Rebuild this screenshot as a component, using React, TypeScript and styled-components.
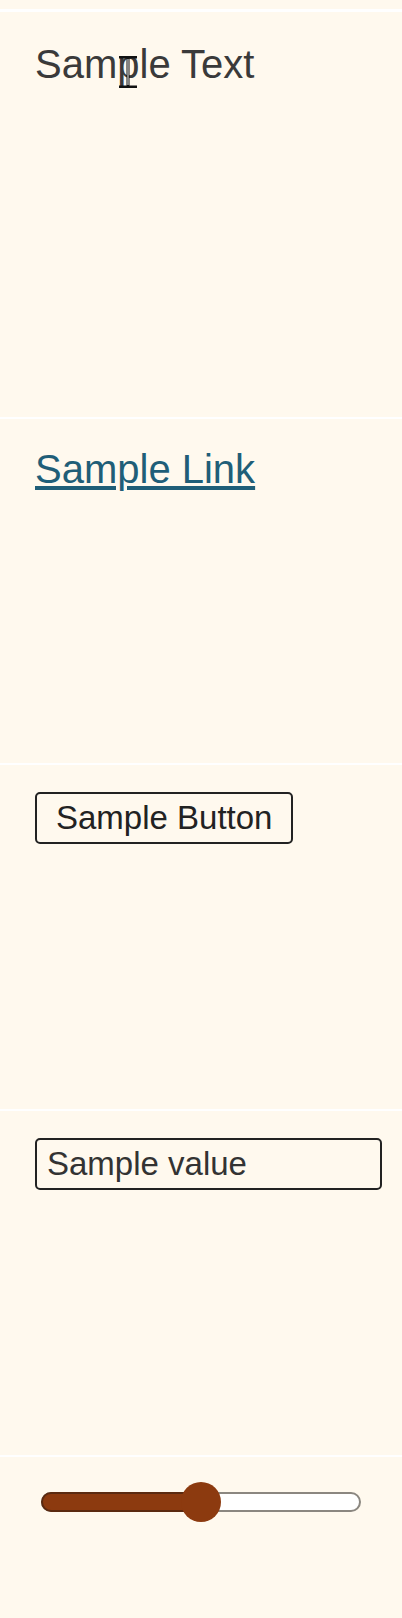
import { FC, useState } from 'react';
import styled, { createGlobalStyle } from 'styled-components';

const GlobalStyle = createGlobalStyle`
  html, body {
    margin: 0;
    padding: 0;
    background: #ffffff;
  }

  body {
    font-family: 'Liberation Sans', Arial, sans-serif;
  }
`;

const Page = styled.div`
  display: flex;
  flex-direction: column;
  gap: 2px;
  width: 402px;
  min-height: 1618px;
`;

const TopStrip = styled.div`
  height: 9px;
  margin-bottom: 1px;
  background: #fff9ee;
`;

const Section = styled.section<{ $height: number }>`
  position: relative;
  box-sizing: border-box;
  height: ${({ $height }) => $height}px;
  padding: 25px 35px;
  background: #fff9ee;

  &:last-child {
    flex: 1;
  }
`;

const SampleText = styled.p`
  margin: 4px 0 0;
  font-size: 40px;
  line-height: 46px;
  color: #3a3a3a;
`;

const SampleLink = styled.a`
  display: inline-block;
  font-size: 40px;
  line-height: 46px;
  margin-top: 2px;
  color: #1f5e78;
  text-decoration: underline;
  text-decoration-thickness: 4px;
  text-underline-offset: 3px;
`;

const SampleButton = styled.button`
  display: inline-block;
  box-sizing: border-box;
  height: 52px;
  margin-top: 2px;
  padding: 0 19px;
  border: 2px solid #222;
  border-radius: 5px;
  background: transparent;
  font-family: inherit;
  font-size: 33px;
  line-height: 46px;
  color: #222;
`;

const SampleInput = styled.input`
  display: block;
  box-sizing: border-box;
  width: 347px;
  height: 52px;
  margin-top: 2px;
  padding: 0 10px;
  border: 2px solid #222;
  border-radius: 5px;
  background: transparent;
  font-family: inherit;
  font-size: 33px;
  color: #333;
  outline: none;
`;

const SliderWrap = styled.div`
  display: flex;
  align-items: center;
  height: 40px;
  margin: 0 0 0 6px;
  width: 320px;
`;

const Track = styled.div`
  position: relative;
  box-sizing: border-box;
  width: 100%;
  height: 20px;
  border: 2px solid #8b8780;
  border-radius: 10px;
  background: #ffffff;
`;

const Fill = styled.div`
  position: absolute;
  left: -2px;
  top: -2px;
  bottom: -2px;
  box-sizing: border-box;
  border: 2px solid #5b2a10;
  border-radius: 10px 0 0 10px;
  background: #8c3a0f;
`;

const Thumb = styled.div`
  position: absolute;
  top: 50%;
  width: 40px;
  height: 40px;
  border-radius: 50%;
  background: #8c3a0f;
  transform: translate(-50%, -50%);
`;

const Caret = styled.svg`
  position: absolute;
  left: 118px;
  top: 43px;
`;

const TextCursor: FC = () => (
  <Caret width="20" height="34" viewBox="0 0 20 34">
    <path d="M1 1h18v2.5H11.5v27H19V33H1v-2.5h7.5v-27H1z" fill="#111" />
    <rect x="9.2" y="4" width="1.6" height="26" fill="#a0a0a0" />
  </Caret>
);

const Slider: FC<{ value: number }> = ({ value }) => (
  <SliderWrap>
    <Track>
      <Fill style={{ width: `calc(${value}% + 2px)` }} />
      <Thumb style={{ left: `${value}%` }} />
    </Track>
  </SliderWrap>
);

const App: FC = () => {
  const [value, setValue] = useState('Sample value');

  return (
    <>
      <GlobalStyle />
      <Page>
        <TopStrip />
        <Section $height={405}>
          <SampleText>Sample Text</SampleText>
          <TextCursor />
        </Section>
        <Section $height={344}>
          <SampleLink href="#">Sample Link</SampleLink>
        </Section>
        <Section $height={344}>
          <SampleButton>Sample Button</SampleButton>
        </Section>
        <Section $height={344}>
          <SampleInput value={value} onChange={(e) => setValue(e.target.value)} />
        </Section>
        <Section $height={161}>
          <Slider value={50} />
        </Section>
      </Page>
    </>
  );
};

export default App;
